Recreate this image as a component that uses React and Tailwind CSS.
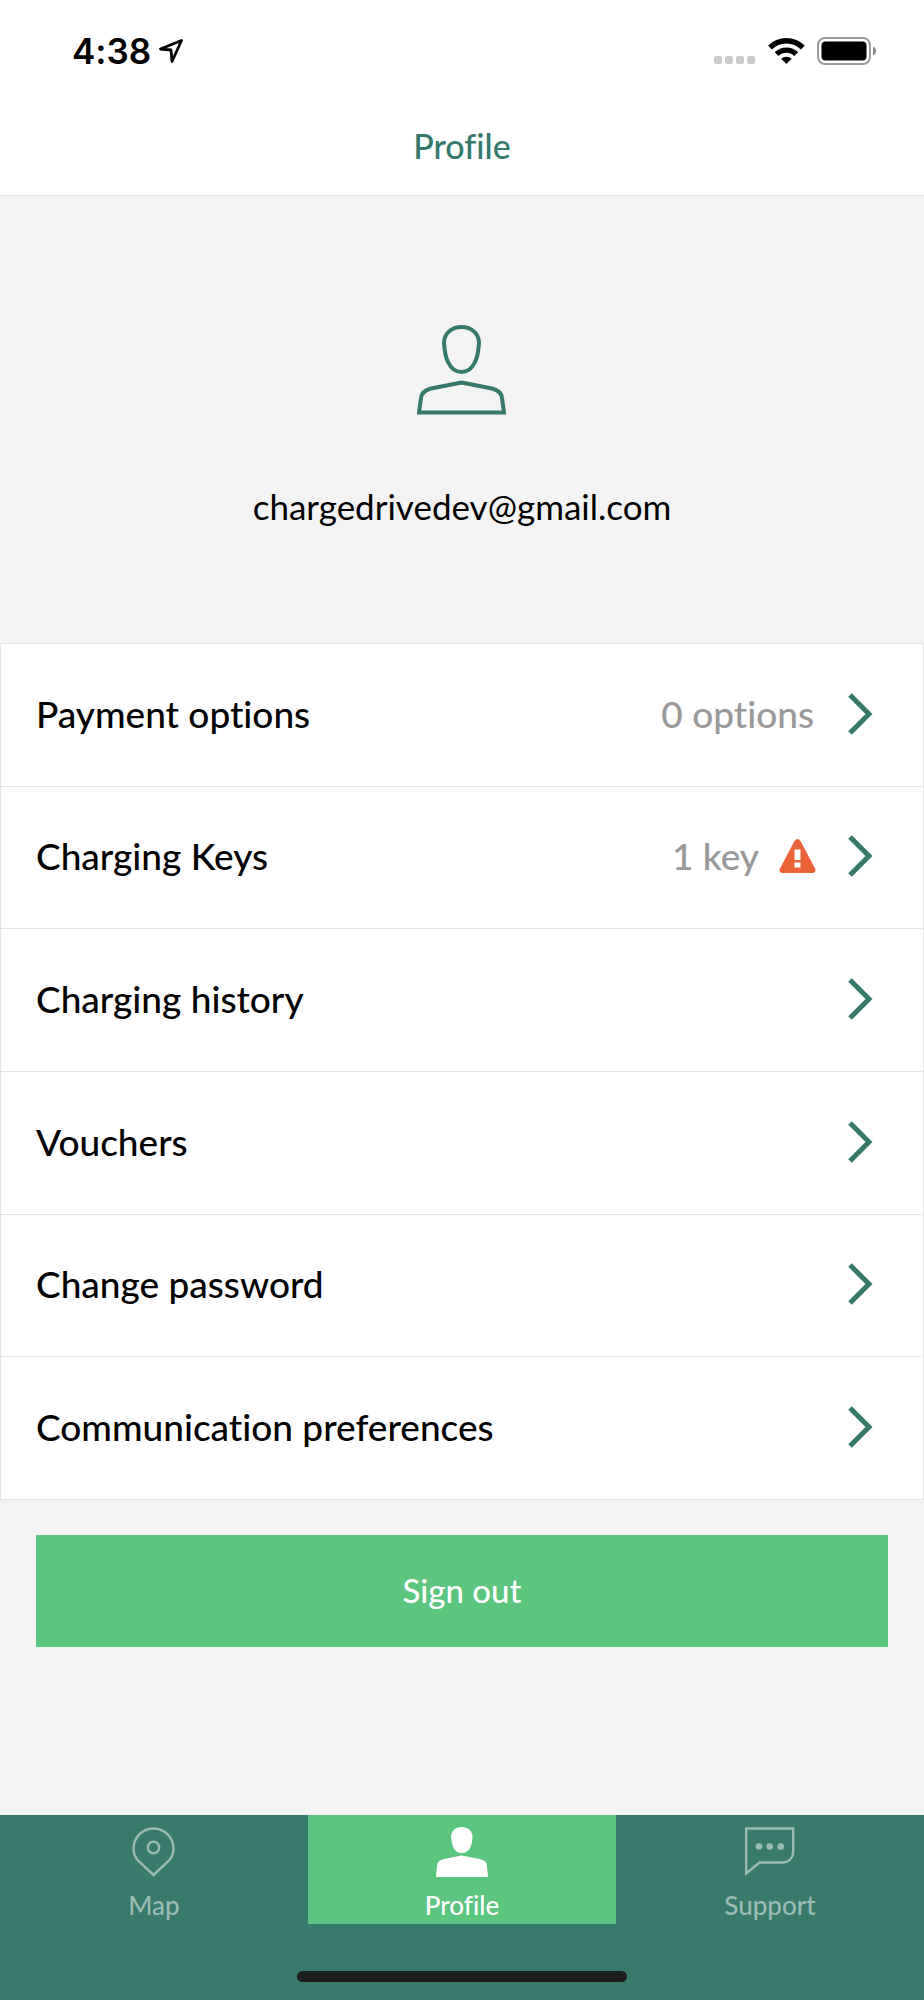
import React from 'react';

const rows = [
  { label: 'Payment options', value: '0 options' },
  { label: 'Charging Keys', value: '1 key', warning: true },
  { label: 'Charging history' },
  { label: 'Vouchers' },
  { label: 'Change password' },
  { label: 'Communication preferences' }
];

const tabs = [
  { label: 'Map', icon: MapIcon },
  { label: 'Profile', icon: ProfileIcon, active: true },
  { label: 'Support', icon: SupportIcon }
];

function MapIcon() {
  return (
    <svg width="50" height="50" viewBox="0 0 50 50" fill="none" stroke="currentColor" strokeWidth="2.400">
      <path d="M24.500 48 L9.500 34 C5.500 30 4.500 25.500 4.500 21.500 A20 20 0 0 1 44.500 21.500 C44.500 25.500 43.500 30 39.500 34 Z" />
      <circle cx="24.500" cy="20.500" r="5.700" />
    </svg>
  );
}

function ProfileIcon() {
  return (
    <svg width="52" height="50" viewBox="0 0 52 50" fill="currentColor">
      <path d="M25.500 0 C32 0 36.500 4 36.500 10 C36 19 33.500 26 25.500 26 C18 26 16 19 15 10 C15 4 19.500 0 25.500 0 Z" />
      <path d="M25.500 28.500 L43.500 32 C48.500 33 50.500 35 51 39 L52 50 H0 L1 39 C1.500 35 3.500 33 8 32 Z" />
    </svg>
  );
}

function SupportIcon() {
  return (
    <svg width="50" height="50" viewBox="0 0 50 50" fill="none" stroke="currentColor" strokeWidth="2.400">
      <path d="M1.200 1.500 H48.200 V24 C48.200 31 44 35.500 37 35.500 H14.500 L1.200 46.500 Z" />
      <g fill="currentColor" stroke="none">
        <circle cx="14" cy="19.500" r="3.300" />
        <circle cx="24.800" cy="19.500" r="3.300" />
        <circle cx="35.700" cy="19.500" r="3.300" />
      </g>
    </svg>
  );
}

function StatusBar() {
  return (
    <div className="flex h-[101px] items-center justify-between pl-[72px] pr-[47px] text-black">
      <div className="flex items-center gap-2">
        <span className="font-['Inter',sans-serif] text-[35px] font-semibold leading-10">4:38</span>
        <svg width="26" height="26" viewBox="0 0 26 26" fill="none" stroke="currentColor" strokeWidth="2.800" strokeLinejoin="round">
          <path d="M22.500 2.500 L1.500 11 L12 12 L13 23.500 Z" />
        </svg>
      </div>
      <div className="flex items-center">
        <div className="mr-[13px] flex gap-[3px] self-end pb-[1px]">
          {[0, 1, 2, 3].map((dot) => (
            <span key={dot} className="h-2 w-2 rounded-[2px] bg-[#cbcbcb]" />
          ))}
        </div>
        <svg className="mr-3" width="37" height="28" viewBox="0 0 37 28" fill="none" stroke="currentColor" strokeWidth="5.400">
          <path d="M2 10.500 A23.200 23.200 0 0 1 34.800 10.500" />
          <path d="M8.600 17.200 A13.800 13.800 0 0 1 28.200 17.200" />
          <path d="M18.400 27 L13.200 21.800 A7.400 7.400 0 0 1 23.600 21.800 Z" fill="currentColor" stroke="none" />
        </svg>
        <svg width="60" height="28" viewBox="0 0 60 28">
          <rect x="1" y="1" width="52" height="26" rx="7" fill="none" stroke="#9a9a9a" strokeWidth="2" />
          <rect x="4.500" y="4.500" width="45" height="19" rx="4" fill="#000" />
          <path d="M56 9.500 C60 11 60 17 56 18.500 Z" fill="#8a8a8a" />
        </svg>
      </div>
    </div>
  );
}

function Row({ label, value, warning }) {
  return (
    <li className="border-b border-[#e4e4e4]">
      <button type="button" className="flex h-full w-full items-center pb-[2px] pl-[35px] pr-[50px] text-left text-[37px] font-medium leading-[44px]">
        <span className="flex-1 text-black">{label}</span>
        {value && <span className="text-[#999999]">{value}</span>}
        {warning && (
          <svg className="ml-5" width="37" height="34" viewBox="0 0 37 34" role="img" aria-label="Warning">
            <path d="M15.500 2 Q18.500 -2 21.500 2 L36 29.500 Q37.500 33.500 34 34 H3 Q-0.500 33.500 1 29.500 Z" fill="#ea6338" />
            <path d="M15.500 10.500 h6 v10.500 h-6 Z M15.500 23.500 h6 v5 h-6 Z" fill="#fff" />
          </svg>
        )}
        <svg className={warning ? 'ml-8' : 'ml-[34px]'} width="25" height="42" viewBox="0 0 25 42" fill="none" stroke="#36796a" strokeWidth="5">
          <path d="M2 2 L21 21 L2 40" />
        </svg>
      </button>
    </li>
  );
}

export default function App() {
  return (
    <div className="flex min-h-screen flex-col bg-[#f3f3f3] font-['Lato',sans-serif] [font-variant-ligatures:none]">
      <header className="border-b border-[#e4e4e4] bg-white">
        <StatusBar />
        <h1 className="h-[94px] pt-[23px] text-center text-[34px] font-medium leading-[44px] text-[#36796a]">Profile</h1>
      </header>

      <main className="flex flex-1 flex-col">
        <section className="flex flex-col items-center pb-[115px] pt-[129px]">
          <svg width="90" height="90" viewBox="37 25 90 90" fill="none" stroke="#36796a" strokeWidth="4">
            <path d="M81.500 27 C92 27 99 34 99 43 C98.500 50 97 58 95 62 C92 68.500 87.500 72 81.500 72 C75.500 72 71 68.500 68 62 C66 58 64.500 50 64 43 C64 34 71 27 81.500 27 Z" />
            <path d="M81.500 82.500 L112 88.500 C118 90 121.500 93.500 122 98 L124 112.500 H39 L41 98 C41.500 93.500 45 90 51 88.500 Z" />
          </svg>
          <p className="mt-[69px] text-[35px] leading-[44px] text-black">chargedrivedev@gmail.com</p>
        </section>

        <ul className="grid min-h-[857px] auto-rows-fr border-x border-t border-[#e4e4e4] bg-white">
          {rows.map((row) => (
            <Row key={row.label} {...row} />
          ))}
        </ul>

        <div className="px-9 py-[35px]">
          <button type="button" className="h-28 w-full bg-[#5bc47f] text-[33px] font-medium text-white">
            Sign out
          </button>
        </div>
      </main>

      <footer className="bg-[#387a6b]">
        <nav className="grid grid-cols-3">
          {tabs.map((tab) => {
            const IconComponent = tab.icon;

            return (
              <a
                key={tab.label}
                href="#"
                className={`flex h-[109px] flex-col items-center pt-3 text-[26px] font-medium leading-8 ${
                  tab.active ? 'bg-[#5bc47f] text-white' : 'text-[#9bbcb5]'
                }`}
              >
                <IconComponent />
                <span className="mt-3">{tab.label}</span>
              </a>
            );
          })}
        </nav>
        <div className="flex h-[76px] items-end justify-center pb-[18px]">
          <div className="h-[11px] w-[330px] rounded-full bg-[#1e1e1e]" />
        </div>
      </footer>
    </div>
  );
}
